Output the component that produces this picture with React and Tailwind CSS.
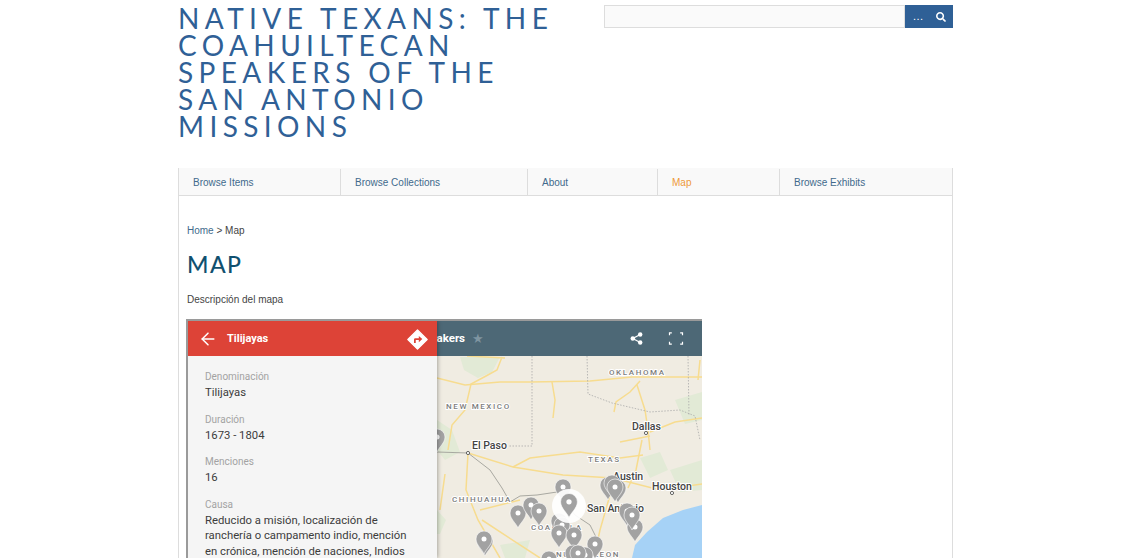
import React from 'react';
import { ArrowLeft } from 'lucide-react';
import { FaSearch } from 'react-icons/fa';

const navItems = [
  { label: 'Browse Items', width: 'w-[162px]' },
  { label: 'Browse Collections', width: 'w-[187px]' },
  { label: 'About', width: 'w-[130px]' },
  { label: 'Map', width: 'w-[122px]', active: true },
  { label: 'Browse Exhibits', width: 'flex-1' },
];

const fields = [
  { label: 'Denominación', value: 'Tilijayas' },
  { label: 'Duración', value: '1673 - 1804' },
  { label: 'Menciones', value: '16' },
  {
    label: 'Causa',
    value: 'Reducido a misión, localización de ranchería o campamento indio, mención en crónica, mención de naciones, Indios',
  },
];

const pins = [
  [437, 440], [563, 490], [518, 516], [531, 508], [539, 514],
  [608, 488], [612, 486], [618, 491], [615, 490], [627, 514], [635, 530], [632, 518],
  [559, 524], [562, 528], [559, 536], [574, 538], [595, 547], [485, 544], [484, 542],
  [549, 562], [573, 556], [585, 558], [578, 556],
];

const Pin = ({ x, y, scale = 1, fill = '#a2a2a2' }) => (
  <g transform={`translate(${x} ${y}) scale(${scale})`}>
    <path
      d="M0 12 C-2 7 -8 3 -8 -3 A8 8 0 1 1 8 -3 C8 3 2 7 0 12 Z"
      fill={fill}
      stroke="#ffffff"
      strokeOpacity="0.75"
      strokeWidth="0.8"
    />
    <circle cx="0" cy="-3" r="2.5" fill="#ffffff" />
  </g>
);

const MapLabel = ({ x, y, size = 8, spacing = 1.6, color = '#7d7d7d', children }) => (
  <text
    x={x}
    y={y}
    fontSize={size}
    letterSpacing={spacing}
    fill={color}
    stroke="#ffffff"
    strokeWidth="2"
    paintOrder="stroke"
    fontFamily="Roboto, sans-serif"
    fontWeight="500"
  >
    {children}
  </text>
);

const MapDrawing = () => (
  <svg viewBox="437 356 265 202" className="block h-full w-full">
    <rect x="437" y="356" width="265" height="202" fill="#f0ece2" />
    {/* green patches */}
    <g fill="#e2ead6">
      <path d="M460 357 L500 357 L492 372 L478 378 L464 370 Z" />
      <path d="M437 420 L452 430 L460 452 L445 460 L437 450 Z" />
      <path d="M675 400 L702 392 L702 420 L685 424 Z" />
      <path d="M437 510 L446 520 L440 534 L437 534 Z" />
      <path d="M500 545 L530 540 L525 558 L505 558 Z" />
      <path d="M640 458 L660 452 L668 470 L650 478 Z" />
      <path d="M670 470 L702 460 L702 490 L680 492 Z" />
    </g>
    {/* gulf */}
    <path d="M702 505 L683 510 L663 518 L647 532 L635 545 L632 558 L702 558 Z" fill="#a6d2f6" />
    {/* roads */}
    <g fill="none" stroke="#f7dc8f" strokeWidth="1.5">
      <path d="M437 378 L465 385 L500 382 L530 382 L590 381 L632 377 L702 377" />
      <path d="M467 356 L505 358 M502 357 L497 370 L486 376 L471 384 L465 410 L452 425 L448 450" />
      <path d="M552 382 L555 400 L553 418" />
      <path d="M640 381 L630 392 L616 402 L614 412 M637 385 L645 410 L648 430 L650 450" />
      <path d="M650 432 L675 422 L702 418 M620 442 L650 436 M700 360 L698 380" />
      <path d="M468 453 L513 467 L563 475 L613 478 L660 490 L702 484" />
      <path d="M513 467 L530 458 L580 452 L620 458 L643 455" />
      <path d="M642 440 L636 470 L628 488 M612 488 L600 530 L596 548" />
      <path d="M468 453 L466 490 L478 520 L500 558" />
      <path d="M445 474 L440 510 M480 510 L520 500 M482 520 L540 558" />
    </g>
    {/* borders */}
    <g fill="none" stroke="#aaaaaa" strokeWidth="0.8" strokeDasharray="1.5 1.5">
      <path d="M532 356 L532 446 L508 446" />
      <path d="M587 356 L588 394 L612 403 L650 412 L680 410 L695 416 L700 440" />
      <path d="M688 356 L689 415" />
    </g>
    <path
      d="M437 452 L468 453 L490 470 L502 488 L510 502 L520 496 L537 495 L557 492 L575 515 L590 525 L600 545"
      fill="none"
      stroke="#a0a09a"
      strokeWidth="0.9"
    />
    <MapLabel x={609} y={375}>OKLAHOMA</MapLabel>
    <MapLabel x={446} y={409}>NEW MEXICO</MapLabel>
    <MapLabel x={588} y={462}>TEXAS</MapLabel>
    <MapLabel x={452} y={502}>CHIHUAHUA</MapLabel>
    <MapLabel x={531} y={530}>COAHUILA</MapLabel>
    <MapLabel x={556} y={557}>NUEVO LEON</MapLabel>
    <MapLabel x={632} y={430} size={10.5} spacing={0} color="#444444">Dallas</MapLabel>
    <MapLabel x={472} y={449} size={10.5} spacing={0} color="#444444">El Paso</MapLabel>
    <MapLabel x={613} y={480} size={10.5} spacing={0} color="#444444">Austin</MapLabel>
    <MapLabel x={652} y={490} size={10.5} spacing={0} color="#444444">Houston</MapLabel>
    <MapLabel x={587} y={512} size={10.5} spacing={0} color="#444444">San Antonio</MapLabel>
    <g fill="#ffffff" stroke="#555555" strokeWidth="0.9">
      <circle cx="646" cy="433" r="1.6" />
      <circle cx="468" cy="453" r="1.6" />
      <circle cx="672" cy="493" r="1.6" />
    </g>
    {pins.map(([x, y], i) => (
      <Pin key={i} x={x} y={y} />
    ))}
    <circle cx="569" cy="506" r="17" fill="#ffffff" fillOpacity="0.92" />
    <Pin x={569} y={505} scale={1.05} />
  </svg>
);

const DirectionsIcon = () => (
  <svg viewBox="0 0 24 24" className="h-[21px] w-[21px]">
    <path
      d="M12 1 L23 12 L12 23 L1 12 Z"
      fill="#ffffff"
      stroke="#ffffff"
      strokeWidth="1.5"
      strokeLinejoin="round"
    />
    <path d="M8 16 V12 Q8 10.5 9.5 10.5 H13.5 V8 L17.5 11.5 L13.5 15 V12.6 H10 V16 Z" fill="#dd4337" />
  </svg>
);

const ShareIcon = () => (
  <svg viewBox="0 0 14 14" className="h-[13px] w-[13px]" fill="#ffffff">
    <circle cx="11" cy="2.6" r="2.4" />
    <circle cx="3" cy="7" r="2.4" />
    <circle cx="11" cy="11.4" r="2.4" />
    <path d="M3 7 L11 2.6 M3 7 L11 11.4" stroke="#ffffff" strokeWidth="1.3" />
  </svg>
);

const FullscreenIcon = () => (
  <svg viewBox="0 0 16 14" className="h-[13px] w-[16px]" fill="none" stroke="#ffffff" strokeWidth="1.3">
    <path d="M1 3.5 V1 H3.5 M12.5 1 H15 V3.5 M15 10.5 V13 H12.5 M3.5 13 H1 V10.5" />
  </svg>
);

export default function App() {
  return (
    <div className="h-[558px] overflow-hidden bg-white font-['Liberation_Sans',Arial,sans-serif]">
      <div className="ml-[178px] w-[775px]">
        <header className="flex h-[168px] items-start justify-between">
          <h1 className="mt-[5px] w-[385px] font-['Lato',sans-serif] text-[28px] leading-[27px] font-normal tracking-[5.4px] text-[#2f6096] uppercase">
            Native Texans: The Coahuiltecan Speakers of the San Antonio Missions
          </h1>
          <form className="mt-[5px] flex h-[23px] w-[349px]">
            <input className="h-full flex-1 border border-[#dddddd] bg-[#fafafa] outline-none" />
            <button
              type="button"
              className="flex h-full w-[48px] items-center justify-between bg-[#2f6096] pr-[7px] pl-[8px] text-white"
            >
              <span className="text-[11px] leading-none tracking-[0.5px]">...</span>
              <FaSearch className="h-[10px] w-[10px]" />
            </button>
          </form>
        </header>

        <nav className="flex h-[28px] border-x border-b border-[#dddddd] bg-[#f9f9f9] pt-[1px] text-[10px]">
          {navItems.map((item, i) => (
            <a
              key={item.label}
              className={`flex items-center pl-[14px] ${item.width} ${i < navItems.length - 1 ? 'border-r border-[#dddddd]' : ''} ${item.active ? 'text-[#ee9a3a]' : 'text-[#426a8c]'}`}
            >
              {item.label}
            </a>
          ))}
        </nav>

        <main className="h-[362px] border-x border-[#dddddd] pt-[29px] pl-[8px]">
          <p className="text-[10px] leading-[12px] text-[#444444]">
            <a className="text-[#426a8c]">Home</a> &gt; Map
          </p>
          <h2 className="mt-[13px] font-['Lato',sans-serif] text-[23px] leading-[28px] font-medium tracking-[1.5px] text-[#10506f] uppercase">
            Map
          </h2>
          <p className="mt-[16px] text-[10px] leading-[12px] text-[#444444]">Descripción del mapa</p>

          <div className="relative mt-[13px] -ml-px flex h-[239px] w-[516px] flex-col overflow-hidden border-t-2 border-l-2 border-[#9a9a9a] font-['Roboto',sans-serif]">
            <div className="flex h-[35px] shrink-0 items-center bg-[#4d6876] text-white">
              <div className="flex w-[277px] justify-end whitespace-nowrap">
                <span className="text-[11.5px] font-bold">Coahuiltecan Speakers</span>
              </div>
              <span className="ml-[7px] text-[13px] leading-none text-[#7f95a1]">★</span>
              <div className="ml-auto flex items-center gap-[25px] pr-[18px]">
                <ShareIcon />
                <FullscreenIcon />
              </div>
            </div>
            <div className="ml-[249px] h-[202px] w-[265px]">
              <MapDrawing />
            </div>

            <aside className="absolute top-0 bottom-0 left-0 w-[249px] bg-[#f5f5f5] shadow-[1px_0_4px_rgba(0,0,0,0.3)]">
              <div className="flex h-[35px] items-center justify-between bg-[#dd4337] pt-px pr-[9px] pl-[10px] text-white">
                <div className="flex items-center gap-[9px]">
                  <ArrowLeft className="h-[20px] w-[20px]" strokeWidth={1.8} />
                  <span className="text-[11px] font-bold">Tilijayas</span>
                </div>
                <DirectionsIcon />
              </div>
              <dl className="px-[17px] pt-[14px]">
                {fields.map((f) => (
                  <div key={f.label} className="mb-[12px]">
                    <dt className="text-[10px] leading-[14px] text-[#a3a3a3]">{f.label}</dt>
                    <dd className="mt-px text-[11.3px] leading-[15.5px] text-[#3c3c3c]">{f.value}</dd>
                  </div>
                ))}
              </dl>
            </aside>
          </div>
        </main>
      </div>
    </div>
  );
}
